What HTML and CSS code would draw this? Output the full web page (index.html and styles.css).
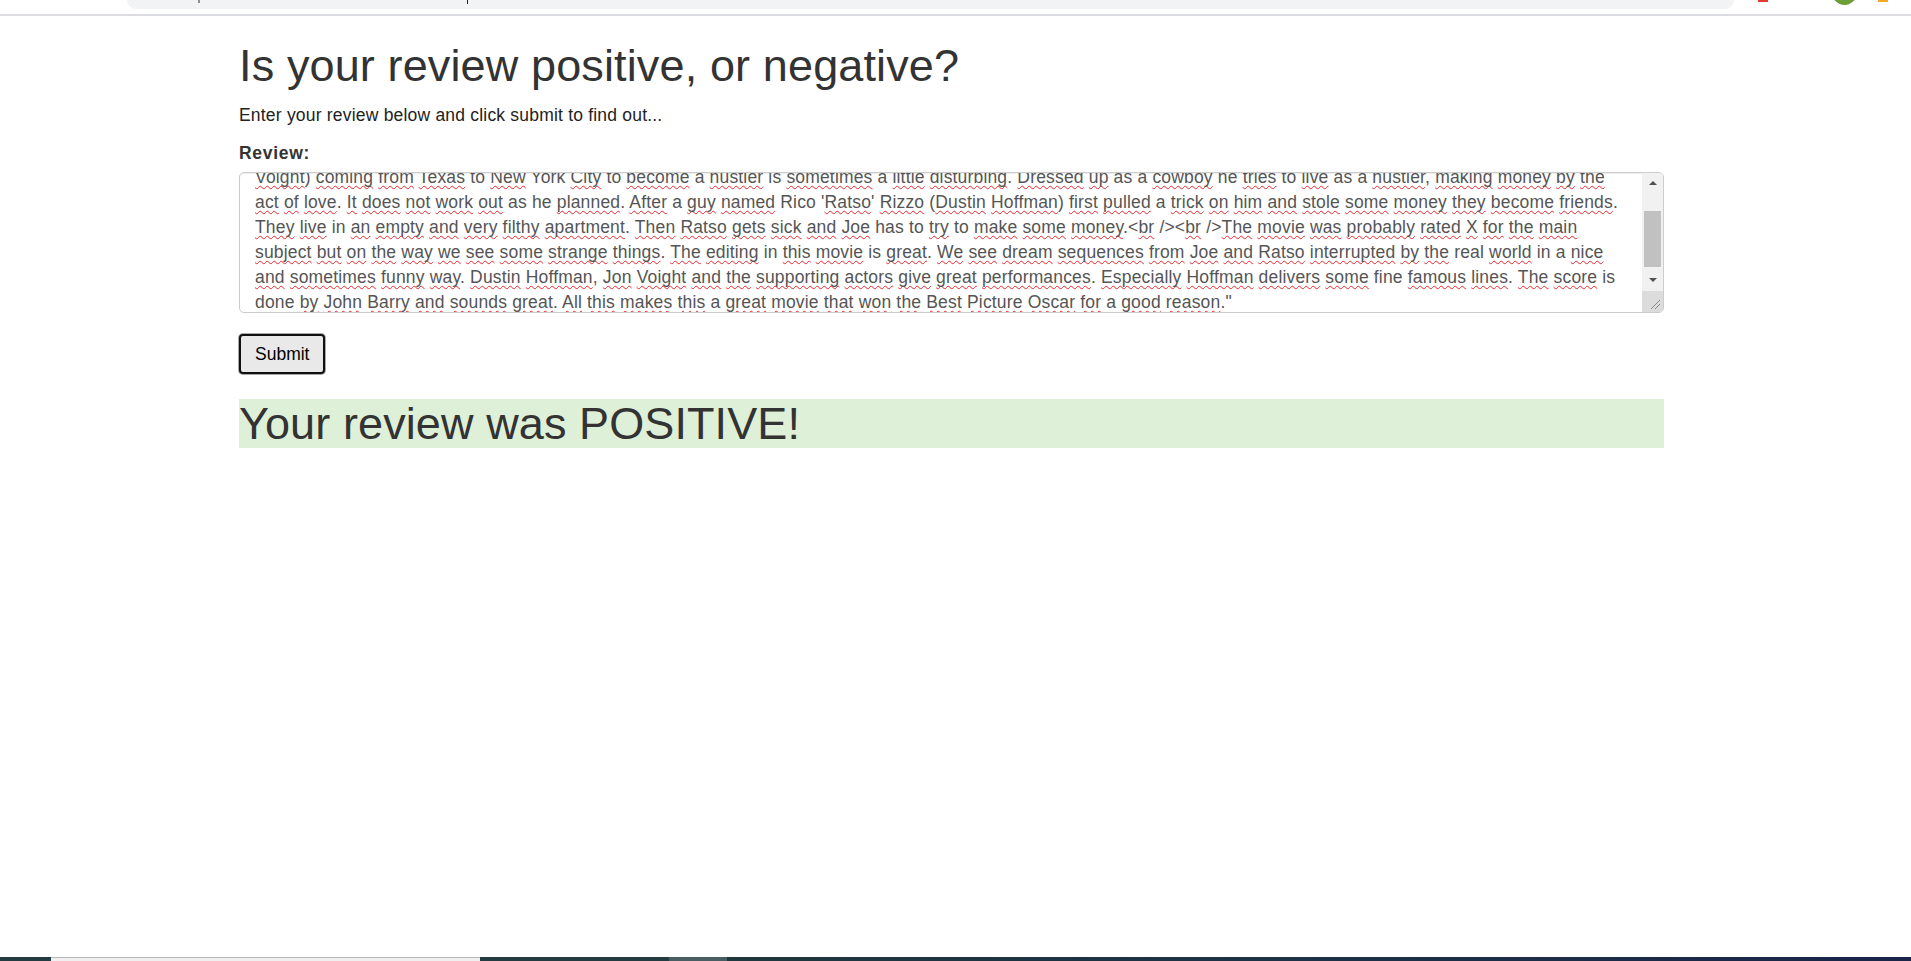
FILE: index.html
```html
<!DOCTYPE html>
<html lang="en">
<head>
<meta charset="utf-8">
<title>Review sentiment</title>
<link rel="stylesheet" href="styles.css">
</head>
<body>
<div class="chrome">
  <div class="omnibox"><span class="omni-tick"></span><span class="omni-caret"></span></div>
  <div class="tray"><span class="tray-red"></span><span class="tray-avatar"></span><span class="tray-orange"></span></div>
</div>
<main class="page">
  <h1 class="title">Is your review positive, or negative?</h1>
  <p class="lead-text">Enter your review below and click submit to find out...</p>
  <form class="review-form">
    <div class="form-group">
      <label class="field-label">Review:</label>
      <div class="textbox">
        <div class="textbox-view">
          <div class="textbox-lines">
            <div class="tline"><span class="typo">Voight</span>) <span class="typo">coming</span> <span class="typo">from</span> <span class="typo">Texas</span> to <span class="typo">New</span> York <span class="typo">City</span> to <span class="typo">become</span> a <span class="typo">hustler</span> is <span class="typo">sometimes</span> a <span class="typo">little</span> <span class="typo">disturbing</span>. <span class="typo">Dressed</span> <span class="typo">up</span> as a <span class="typo">cowboy</span> he <span class="typo">tries</span> to <span class="typo">live</span> as a <span class="typo">hustler</span>, <span class="typo">making</span> <span class="typo">money</span> <span class="typo">by</span> <span class="typo">the</span></div>
            <div class="tline"><span class="typo">act</span> <span class="typo">of</span> <span class="typo">love</span>. <span class="typo">It</span> <span class="typo">does</span> <span class="typo">not</span> <span class="typo">work</span> <span class="typo">out</span> as he <span class="typo">planned</span>. <span class="typo">After</span> a <span class="typo">guy</span> <span class="typo">named</span> Rico '<span class="typo">Ratso</span>' <span class="typo">Rizzo</span> (<span class="typo">Dustin</span> <span class="typo">Hoffman</span>) <span class="typo">first</span> <span class="typo">pulled</span> a <span class="typo">trick</span> <span class="typo">on</span> <span class="typo">him</span> <span class="typo">and</span> <span class="typo">stole</span> <span class="typo">some</span> <span class="typo">money</span> <span class="typo">they</span> <span class="typo">become</span> <span class="typo">friends</span>.</div>
            <div class="tline"><span class="typo">They</span> <span class="typo">live</span> in <span class="typo">an</span> <span class="typo">empty</span> <span class="typo">and</span> <span class="typo">very</span> <span class="typo">filthy</span> <span class="typo">apartment</span>. <span class="typo">Then</span> <span class="typo">Ratso</span> <span class="typo">gets</span> <span class="typo">sick</span> <span class="typo">and</span> <span class="typo">Joe</span> has to <span class="typo">try</span> to <span class="typo">make</span> <span class="typo">some</span> <span class="typo">money</span>.&lt;<span class="typo">br</span> /&gt;&lt;<span class="typo">br</span> /&gt;<span class="typo">The</span> <span class="typo">movie</span> <span class="typo">was</span> <span class="typo">probably</span> <span class="typo">rated</span> <span class="typo">X</span> <span class="typo">for</span> <span class="typo">the</span> <span class="typo">main</span></div>
            <div class="tline"><span class="typo">subject</span> <span class="typo">but</span> <span class="typo">on</span> <span class="typo">the</span> <span class="typo">way</span> <span class="typo">we</span> <span class="typo">see</span> <span class="typo">some</span> <span class="typo">strange</span> <span class="typo">things</span>. <span class="typo">The</span> <span class="typo">editing</span> in <span class="typo">this</span> <span class="typo">movie</span> is <span class="typo">great</span>. <span class="typo">We</span> <span class="typo">see</span> <span class="typo">dream</span> <span class="typo">sequences</span> <span class="typo">from</span> <span class="typo">Joe</span> <span class="typo">and</span> <span class="typo">Ratso</span> <span class="typo">interrupted</span> <span class="typo">by</span> <span class="typo">the</span> real <span class="typo">world</span> in a <span class="typo">nice</span></div>
            <div class="tline"><span class="typo">and</span> <span class="typo">sometimes</span> <span class="typo">funny</span> <span class="typo">way</span>. <span class="typo">Dustin</span> <span class="typo">Hoffman</span>, <span class="typo">Jon</span> <span class="typo">Voight</span> <span class="typo">and</span> <span class="typo">the</span> <span class="typo">supporting</span> <span class="typo">actors</span> <span class="typo">give</span> <span class="typo">great</span> <span class="typo">performances</span>. <span class="typo">Especially</span> <span class="typo">Hoffman</span> <span class="typo">delivers</span> <span class="typo">some</span> fine <span class="typo">famous</span> <span class="typo">lines</span>. <span class="typo">The</span> <span class="typo">score</span> is</div>
            <div class="tline">done <span class="typo">by</span> <span class="typo">John</span> <span class="typo">Barry</span> <span class="typo">and</span> <span class="typo">sounds</span> <span class="typo">great</span>. <span class="typo">All</span> <span class="typo">this</span> <span class="typo">makes</span> <span class="typo">this</span> a <span class="typo">great</span> <span class="typo">movie</span> <span class="typo">that</span> <span class="typo">won</span> <span class="typo">the</span> <span class="typo">Best</span> <span class="typo">Picture</span> <span class="typo">Oscar</span> <span class="typo">for</span> a <span class="typo">good</span> <span class="typo">reason</span>."</div>
          </div>
        </div>
        <div class="scrollbar">
          <div class="sb-btn"><span class="arrow-up"></span></div>
          <div class="sb-track"><div class="sb-thumb"></div></div>
          <div class="sb-btn"><span class="arrow-down"></span></div>
          <div class="sb-corner">
            <svg width="21" height="21" viewBox="0 0 21 21"><path d="M18 9 L9 18 M18 13 L13 18" stroke="#8a8a8a" stroke-width="1" fill="none"/></svg>
          </div>
        </div>
      </div>
    </div>
    <div class="actions"><button class="submit-btn" type="button">Submit</button></div>
  </form>
  <h1 class="result">Your review was POSITIVE!</h1>
</main>
<div class="taskbar">
  <span class="tb-start"></span>
  <span class="tb-search"></span>
  <span class="tb-dark"></span>
  <span class="tb-active"></span>
  <span class="tb-rest"></span>
</div>
</body>
</html>
```

FILE: styles.css
```css
* { box-sizing: border-box; }
html, body { margin: 0; padding: 0; }
body {
  background: #fff;
  font-family: "Liberation Sans", Arial, sans-serif;
  font-size: 17.5px;
  line-height: 25px;
  color: #333;
  min-height: 100vh;
  display: flex;
  flex-direction: column;
}

/* browser chrome strip */
.chrome {
  height: 16px;
  display: flex;
  align-items: flex-start;
  border-bottom: 2px solid #dadce0;
  flex: none;
}
.omnibox {
  margin-left: 127px;
  width: 1607px;
  height: 9px;
  background: #f1f3f4;
  border-radius: 0 0 14px 14px;
  display: flex;
  align-items: flex-start;
}
.omni-tick { margin-left: 71px; width: 2px; height: 3px; background: #8e8e8e; }
.omni-caret { margin-left: 267px; width: 1px; height: 4px; background: #222; }
.tray { display: flex; align-items: flex-start; }
.tray-red { margin-left: 24px; width: 10px; height: 2px; background: #e53935; }
.tray-avatar { margin-left: 64px; margin-top: -20px; width: 25px; height: 25px; border-radius: 50%; background: #6b9e34; }
.tray-orange { margin-left: 21px; width: 10px; height: 2px; background: #f5a623; }

/* page */
.page {
  flex: 1;
  width: 1425px;
  margin-left: 239px;
}
.title {
  margin: 25px 0 12.5px;
  font-size: 45px;
  line-height: 49.5px;
  font-weight: 400;
  letter-spacing: 0.13px;
  color: #333;
}
.lead-text { margin: 0 0 12.5px; letter-spacing: 0.2px; color: #222; }
.review-form { margin: 0; }
.form-group { margin-bottom: 18.75px; }
.field-label {
  display: block;
  font-weight: 700;
  letter-spacing: 0.7px;
  margin-bottom: 6.25px;
}
.textbox {
  display: flex;
  height: 141px;
  border: 1px solid #ccc;
  border-radius: 5px;
  overflow: hidden;
  box-shadow: inset 0 1px 1px rgba(0,0,0,.075);
  background: #fff;
}
.textbox-view {
  flex: 1;
  overflow: hidden;
  padding: 0 15px;
  color: #555;
  letter-spacing: 0.17px;
}
.textbox-lines { margin-top: -8px; }
.tline { white-space: nowrap; height: 25px; }
.typo {
  text-decoration: underline wavy #e8262b;
  text-decoration-thickness: 1px;
  text-underline-offset: 2px;
  text-decoration-skip-ink: none;
}

.scrollbar {
  width: 21px;
  flex: none;
  display: flex;
  flex-direction: column;
  background: #f1f1f1;
}
.sb-btn {
  height: 21px;
  display: flex;
  align-items: center;
  justify-content: center;
}
.arrow-up {
  width: 0; height: 0;
  border-left: 4px solid transparent;
  border-right: 4px solid transparent;
  border-bottom: 4px solid #505050;
}
.arrow-down {
  width: 0; height: 0;
  border-left: 4px solid transparent;
  border-right: 4px solid transparent;
  border-top: 4px solid #505050;
}
.sb-track { flex: 1; padding: 17px 2px 0; }
.sb-thumb { height: 56px; background: #c1c1c1; }
.sb-corner { height: 21px; background: #dcdcdc; }
.sb-corner svg { display: block; }

.actions { padding-top: 2px; }
.submit-btn {
  font-family: "Liberation Sans", Arial, sans-serif;
  font-size: 17.5px;
  line-height: 24px;
  padding: 6px 14px;
  color: #000;
  background: #e9e9e9;
  border: 2px solid #111;
  border-radius: 4px;
  box-shadow: 0 0 0 1px #a8a8a8;
}

.result {
  margin: 25px 0 0;
  font-size: 45px;
  line-height: 49.5px;
  font-weight: 400;
  letter-spacing: 0.1px;
  color: #333;
  background: #dff0d8;
}

/* taskbar strip */
.taskbar {
  flex: none;
  height: 4px;
  display: flex;
}
.taskbar span { display: block; height: 4px; }
.tb-start { width: 51px; background: #233b41; }
.tb-search { width: 429px; background: #f0f0f0; border-top: 1px solid #b8b8b8; }
.tb-dark { width: 189px; background: #233b41; }
.tb-active { width: 58px; background: #4a5d63; }
.tb-rest { flex: 1; background: linear-gradient(90deg, #20373e, #1d2f47 60%, #1a2548); }
```
